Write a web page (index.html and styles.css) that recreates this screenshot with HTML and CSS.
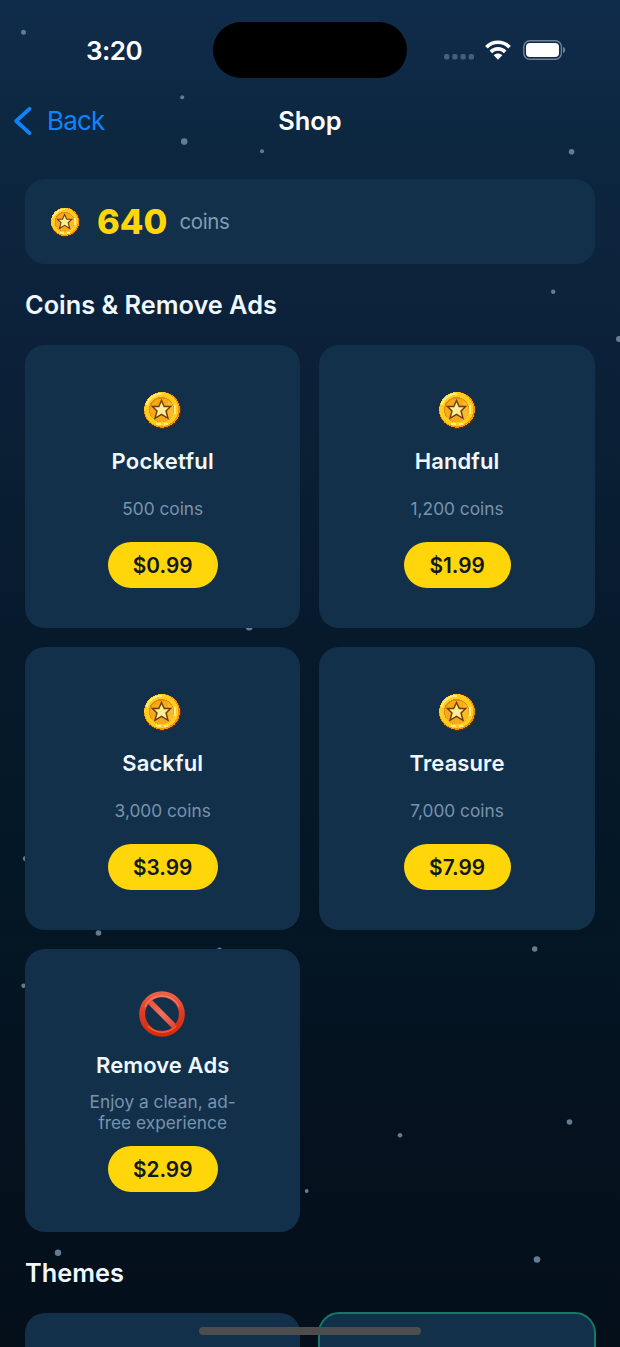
FILE: index.html
```html
<!DOCTYPE html>
<html lang="en">
<head>
<meta charset="utf-8">
<title>Shop</title>
<link rel="stylesheet" href="styles.css">
</head>
<body>
<svg class="defs" width="0" height="0" aria-hidden="true">
  <defs>
    <linearGradient id="red" x1="0" y1="0" x2="0" y2="1"><stop offset="0" stop-color="#ed6048"/><stop offset=".45" stop-color="#df3c22"/><stop offset="1" stop-color="#d92b0b"/></linearGradient>
    <linearGradient id="bar" gradientUnits="userSpaceOnUse" x1="9" y1="9" x2="37" y2="37"><stop offset="0" stop-color="#e84f38"/><stop offset=".5" stop-color="#f0705f"/><stop offset="1" stop-color="#e0452f"/></linearGradient>
    <symbol id="coin" viewBox="0 0 38 38">
      <g shape-rendering="crispEdges">
        <circle cx="19.3" cy="19.2" r="18.6" fill="#5c2a10"/>
        <circle cx="19" cy="18.8" r="17.9" fill="#ee9409"/>
        <circle cx="18.3" cy="18.2" r="17" fill="#ffcd20"/>
        <path d="M3.5 14A16 16 0 0 1 19 2.8" fill="none" stroke="#ffed78" stroke-width="2"/>
        <path d="M13 32.6H18M21 32.6H25M32 14V23" fill="none" stroke="#ffec85" stroke-width="2"/>
        <circle cx="18.5" cy="18.6" r="12.6" fill="#e38b0a"/>
        <circle cx="19" cy="19.4" r="11.9" fill="#f6a91a"/>
        <path d="M25 9.5A12 12 0 0 1 25 29.5Z" fill="#fcb92a"/>
      </g>
      <path fill="#ffed94" stroke="#6d3c12" stroke-width="1.4" d="M18.5 9.5L21.2 15.5H27.6L23 20L25 27.3L18.5 23.3L12 27.3L14 20L9.4 15.5H15.8Z"/>
    </symbol>
  </defs>
</svg>
<div class="screen">
  <svg class="stars" viewBox="0 0 620 1347" aria-hidden="true">
    <circle cx="23.5" cy="32.3" r="2.5"/><circle cx="182.2" cy="97.3" r="2"/><circle cx="184.2" cy="141.6" r="3.3"/><circle cx="262" cy="151.2" r="2"/><circle cx="571.6" cy="151.8" r="2.8"/><circle cx="553.2" cy="291.7" r="2.2"/><circle cx="619" cy="339" r="3"/><circle cx="249.2" cy="627" r="3.5"/><circle cx="25.5" cy="858.5" r="2.6"/><circle cx="98.5" cy="933" r="2.8"/><circle cx="219.5" cy="950" r="2.5"/><circle cx="534.7" cy="949" r="2.7"/><circle cx="23.6" cy="985.8" r="2.3"/><circle cx="569.5" cy="1122" r="2.8"/><circle cx="400" cy="1135.3" r="2.3"/><circle cx="306.7" cy="1191" r="1.9"/><circle cx="58" cy="1252.7" r="3.2"/><circle cx="537" cy="1259.5" r="3.3"/>
  </svg>

  <header class="status">
    <time class="clock">3:20</time>
    <div class="island"></div>
    <div class="signals">
      <svg width="30" height="6" viewBox="0 0 30 6" fill="#47607a"><rect width="5.4" height="5.6" rx="2"/><rect x="8.2" width="5.4" height="5.6" rx="2"/><rect x="16.4" width="5.4" height="5.6" rx="2"/><rect x="24.6" width="5.4" height="5.6" rx="2"/></svg>
      <svg class="wifi" width="26" height="20" viewBox="0 0 26 20" fill="none" stroke="#fff" stroke-width="3.7"><path d="M1.4 7.2C8 .6 18 .6 24.6 7.2"/><path d="M5.8 11.9C10 7.9 16 7.9 20.2 11.9"/><path fill="#fff" stroke="none" d="M8.7 15.3C11.1 13 14.9 13 17.3 15.3L13 19.8Z"/></svg>
      <svg class="battery" width="43" height="20" viewBox="0 0 43 20"><rect x=".8" y=".8" width="37.6" height="18.4" rx="6" fill="none" stroke="#70839a" stroke-width="1.4"/><rect x="3" y="3" width="33" height="14" rx="4" fill="#fff"/><path d="M40 6.8Q42.2 7.8 42.2 10T40 13.2Z" fill="#70839a"/></svg>
    </div>
  </header>

  <nav class="nav">
    <a class="back"><svg width="20" height="30" viewBox="0 0 20 30" fill="none" stroke="#0f84fa" stroke-width="3.8" stroke-linecap="round" stroke-linejoin="round"><path d="M16.5 2.8L3.2 15L16.5 27.2"/></svg><span>Back</span></a>
    <h1>Shop</h1>
  </nav>

  <main>
    <section class="balance">
      <svg class="coin-small"><use href="#coin"/></svg>
      <strong>640</strong><span>coins</span>
    </section>
    <h2>Coins &amp; Remove Ads</h2>
    <section class="grid">
      <article class="card"><div class="icon"><svg class="coin"><use href="#coin"/></svg></div><h3 class="wide">Pocketful</h3><p>500 coins</p><button>$0.99</button></article>
      <article class="card"><div class="icon"><svg class="coin"><use href="#coin"/></svg></div><h3>Handful</h3><p>1,200 coins</p><button class="narrow">$1.99</button></article>
      <article class="card"><div class="icon"><svg class="coin"><use href="#coin"/></svg></div><h3>Sackful</h3><p>3,000 coins</p><button>$3.99</button></article>
      <article class="card"><div class="icon"><svg class="coin"><use href="#coin"/></svg></div><h3>Treasure</h3><p>7,000 coins</p><button class="narrow">$7.99</button></article>
      <article class="card"><div class="icon"><svg width="46" height="46" viewBox="0 0 46 46" fill="none"><path d="M9 9L37 37" stroke="url(#bar)" stroke-width="5.6"/><circle cx="23" cy="23" r="19.8" stroke="url(#red)" stroke-width="6"/><path d="M6 16A18.5 18.5 0 0 1 40 16" stroke="#f58e7b" stroke-width="1.2" opacity=".7"/><path d="M9 35A19 19 0 0 0 37 35" stroke="#ef5f43" stroke-width="1.5"/></svg></div><h3>Remove Ads</h3><p>Enjoy a clean, ad-<br>free experience</p><button>$2.99</button></article>
    </section>
    <h2>Themes</h2>
    <section class="grid">
      <article class="card"></article>
      <article class="card selected"></article>
    </section>
  </main>
  <div class="home-indicator"></div>
</div>
</body>
</html>
```
FILE: styles.css
```css
* { box-sizing: border-box; }
body { margin: 0; font-family: Inter, "Liberation Sans", sans-serif; }
h1, h2, h3, p { margin: 0; }
.defs { position: absolute; }
.screen {
  position: relative;
  width: 620px;
  height: 1347px;
  overflow: hidden;
  color: #eff8ff;
  background: linear-gradient(#0f2c4a 0, #0c263f 12%, #0c2139 26%, #071a2c 48%, #041725 66%, #05111e 84%, #040f1a 100%);
}
.stars { position: absolute; inset: 0; fill: #657b91; }
.status, .nav, main { position: relative; }
.status {
  height: 100px;
  padding: 22px 54px 0 86px;
  display: grid;
  grid-template-columns: 127px 194px 1fr;
}
.clock { height: 56px; line-height: 57px; font-size: 26px; font-weight: 600; letter-spacing: -.5px; color: #fff; }
.island { height: 56px; border-radius: 28px; background: #000; }
.signals { height: 56px; display: flex; align-items: center; justify-content: flex-end; }
.signals > svg:first-child { margin-top: 14px; }
.wifi { margin-left: 11px; }
.battery { margin-left: 12px; }
.nav {
  height: 42px;
  padding: 0 13px;
  display: grid;
  grid-template-columns: 1fr auto 1fr;
  align-items: center;
}
.back { display: flex; align-items: center; gap: 14px; font-size: 26px; line-height: 30px; letter-spacing: -.8px; color: #0f84fa; }
.nav h1 { font-size: 25.4px; font-weight: 600; line-height: 30px; color: #fff; }
main { padding: 37px 25px 0; }
.balance {
  height: 85px;
  padding: 0 25px;
  display: flex;
  align-items: center;
  border-radius: 20px;
  background: #13304a;
}
.coin-small { width: 30px; height: 30px; }
.balance strong { margin-left: 17px; font-size: 34.5px; font-weight: 800; color: #ffd60a; }
.balance span { margin-left: 12px; font-size: 20.5px; letter-spacing: -.4px; color: #819bb3; }
h2 { margin: 25px 0 24px; font-size: 25.3px; font-weight: 600; line-height: 32px; }
.grid { display: grid; grid-template-columns: 275.4px 275.8px; gap: 19px 18.8px; }
.card {
  height: 283px;
  padding-top: 42px;
  display: flex;
  flex-direction: column;
  align-items: center;
  border-radius: 20px;
  background: #13304a;
}
.icon { height: 46px; display: flex; align-items: center; }
.icon svg { margin: -1px 1px 0 0; }
.coin { width: 38px; height: 38px; }
.card h3 { margin-top: 13px; font-size: 22px; font-weight: 600; line-height: 30px; letter-spacing: .1px; }
.card h3.wide { letter-spacing: .25px; }
.card p {
  height: 42px;
  margin-top: 11px;
  display: flex;
  align-items: center;
  text-align: center;
  font-size: 17.3px;
  line-height: 21px;
  color: #7893ae;
}
.card button {
  width: 110px;
  height: 46px;
  margin-top: 13px;
  padding: 0;
  border: 0;
  border-radius: 23px;
  font: 600 20.8px Inter, "Liberation Sans", sans-serif;
  color: #111820;
  background: #ffd60a;
}
.card button.narrow { width: 107px; }
.selected { margin: -1px; height: 285px; border: 2px solid #137a67; border-radius: 21px; }
.home-indicator {
  position: absolute;
  left: 199px;
  top: 1327px;
  width: 222px;
  height: 8px;
  border-radius: 4px;
  background: #4d4d4e;
}
```
